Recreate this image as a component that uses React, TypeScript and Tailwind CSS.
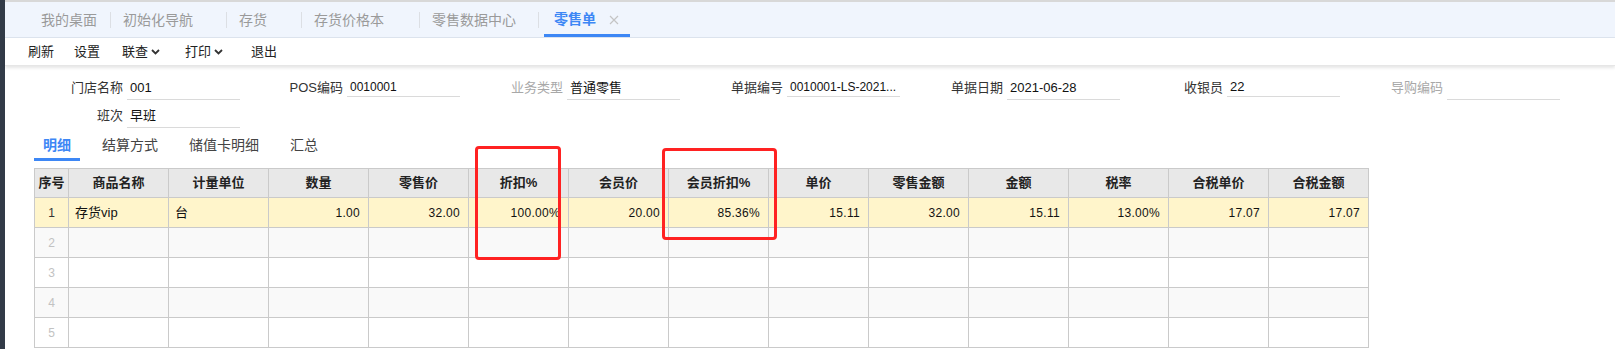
import React from "react";

const font = { fontFamily: '"Liberation Sans", "Noto Sans CJK SC", sans-serif' };

const tabs = [
  { name: "我的桌面", w: "w-[81px]" },
  { name: "初始化导航", w: "w-[115px]" },
  { name: "存货", w: "w-[74px]" },
  { name: "存货价格本", w: "w-[117px]" },
  { name: "零售数据中心", w: "w-[118px]" },
];

type Field = { label: string; value?: string; grey?: boolean; short?: boolean; small?: boolean };

const row1: Field[] = [
  { label: "门店名称", value: "001" },
  { label: "POS编码", value: "0010001", short: true, small: true },
  { label: "业务类型", value: "普通零售", grey: true },
  { label: "单据编号", value: "0010001-LS-2021...", short: true, small: true },
  { label: "单据日期", value: "2021-06-28" },
  { label: "收银员", value: "22", short: true },
  { label: "导购编码", grey: true },
];

const headers = [
  "商品名称", "计量单位", "数量", "零售价", "折扣%", "会员价", "会员折扣%",
  "单价", "零售金额", "金额", "税率", "合税单价", "合税金额",
];

const firstRow = [
  "存货vip", "台", "1.00", "32.00", "100.00%", "20.00", "85.36%",
  "15.11", "32.00", "15.11", "13.00%", "17.07", "17.07",
];

function Chevron() {
  return (
    <svg width="9" height="6" viewBox="0 0 9 6" className="ml-[3px] mt-[1px]">
      <path d="M1 1 L4.5 4.5 L8 1" fill="none" stroke="#333" strokeWidth="1.8" />
    </svg>
  );
}

function FormField({ f }: { f: Field }) {
  return (
    <div className="flex w-[220px] items-start">
      <div className={`w-[103px] h-[24px] pr-[4px] flex items-center justify-end text-[13px] ${f.grey ? "text-[#a8a8a8]" : "text-[#333]"}`}>
        {f.label}
      </div>
      <div
        className={`w-[113px] flex items-center border-b border-[#dadada] text-[#111] whitespace-nowrap overflow-hidden pl-[3px] ${f.short ? "h-[21px] pt-[1px]" : "h-[24px]"} ${f.small ? "text-[12px]" : "text-[13px]"}`}
      >
        {f.value}
      </div>
    </div>
  );
}

export default function App() {
  const emptyRows = [2, 3, 4, 5];

  return (
    <div className="relative flex w-full h-[349px] overflow-hidden bg-white" style={font}>
      <div className="w-[5px] shrink-0 bg-[#323b48]" />

      <div className="flex-1 flex flex-col">
        {/* tab bar */}
        <div className="shrink-0 h-[38px] border-t-2 border-[#d8d8d8] border-b border-b-[#dde4ee] bg-[#f0f5fd] flex items-stretch pl-[24px]">
          {tabs.map((t, i) => (
            <div key={t.name} className="flex items-center">
              {i > 0 && <span className="w-px h-[16px] bg-[#dcdfe4]" />}
              <div className={`${t.w} h-full flex items-center pl-[12px] pt-[2px] text-[14px] text-[#9a9a9a] whitespace-nowrap`}>
                {t.name}
              </div>
            </div>
          ))}
          <div className="flex items-center">
            <span className="w-px h-[16px] bg-[#dcdfe4]" />
          </div>
          <div className="ml-[5px] w-[86px] h-full flex items-center pl-[10px] pt-[3px] border-b-[3px] border-[#3d87f5] text-[14px] font-bold text-[#3d87f5] -mb-px">
            零售单
            <svg width="10" height="10" viewBox="0 0 10 10" className="ml-[13px]">
              <path d="M1 1 L9 9 M9 1 L1 9" stroke="#c4c4c4" strokeWidth="1.2" />
            </svg>
          </div>
        </div>

        {/* toolbar */}
        <div className="shrink-0 h-[28px] flex items-center pl-[13px] text-[13px] text-[#222] border-b border-[#e6e6e6] shadow-[0_2px_3px_rgba(0,0,0,0.10)]">
          <div className="px-[10px]">刷新</div>
          <div className="px-[10px]">设置</div>
          <div className="px-[10px] ml-[2px] flex items-center">联查<Chevron /></div>
          <div className="px-[10px] ml-[5px] flex items-center">打印<Chevron /></div>
          <div className="px-[10px] ml-[8px]">退出</div>
        </div>

        {/* header form */}
        <div className="shrink-0 pt-[10px] pl-[19px] flex flex-col gap-[4px]">
          <div className="flex">
            {row1.map((f) => (
              <FormField key={f.label} f={f} />
            ))}
          </div>
          <div className="flex">
            <FormField f={{ label: "班次", value: "早班" }} />
          </div>
        </div>

        {/* sub tabs */}
        <div className="shrink-0 mt-[1px] ml-[29px] h-[32px] flex items-stretch gap-[13px] text-[14px] text-[#444]">
          <div className="px-[9px] flex items-center border-b-[3px] border-[#3d87f5] font-bold text-[#3d87f5] pt-[3px]">明细</div>
          <div className="px-[9px] flex items-center pt-[3px] border-b-[3px] border-transparent">结算方式</div>
          <div className="px-[9px] flex items-center pt-[3px] border-b-[3px] border-transparent">储值卡明细</div>
          <div className="px-[9px] flex items-center pt-[3px] border-b-[3px] border-transparent">汇总</div>
        </div>

        {/* grid */}
        <div className="shrink-0 mt-[7px] ml-[29px]">
          <table className="border-collapse table-fixed text-[12px] text-[#111]">
            <colgroup>
              <col className="w-[34px]" />
              {headers.map((h) => (
                <col key={h} className="w-[100px]" />
              ))}
            </colgroup>
            <thead>
              <tr className="bg-[#e8e8e8] h-[29px]">
                <th className="border border-[#cacaca] text-[13px] font-bold text-[#222] p-0">序号</th>
                {headers.map((h) => (
                  <th key={h} className="border border-[#cacaca] text-[13px] font-bold text-[#222] p-0">{h}</th>
                ))}
              </tr>
            </thead>
            <tbody>
              <tr className="bg-[#fff5cb] h-[30px]">
                <td className="border border-[#cacaca] text-center text-[#333]">1</td>
                {firstRow.map((v, i) => (
                  <td
                    key={i}
                    className={`border border-[#cacaca] whitespace-nowrap ${i < 2 ? "text-left pl-[6px] text-[13px]" : "text-right pr-[8px] tracking-[0.3px]"}`}
                  >
                    {v}
                  </td>
                ))}
              </tr>
              {emptyRows.map((n) => (
                <tr key={n} className={`h-[30px] ${n % 2 === 0 ? "bg-[#f9f9f9]" : "bg-white"}`}>
                  <td className="border border-[#cacaca] text-center text-[#c2c2c2]">{n}</td>
                  {headers.map((h) => (
                    <td key={h} className="border border-[#cacaca]" />
                  ))}
                </tr>
              ))}
            </tbody>
          </table>
        </div>
      </div>

      {/* red annotation boxes */}
      <div className="absolute left-[475px] top-[146px] w-[86px] h-[114px] border-[3px] border-[#ff2222] rounded-[4px] pointer-events-none" />
      <div className="absolute left-[662px] top-[148px] w-[115px] h-[92px] border-[3px] border-[#ff2222] rounded-[4px] pointer-events-none" />
    </div>
  );
}
